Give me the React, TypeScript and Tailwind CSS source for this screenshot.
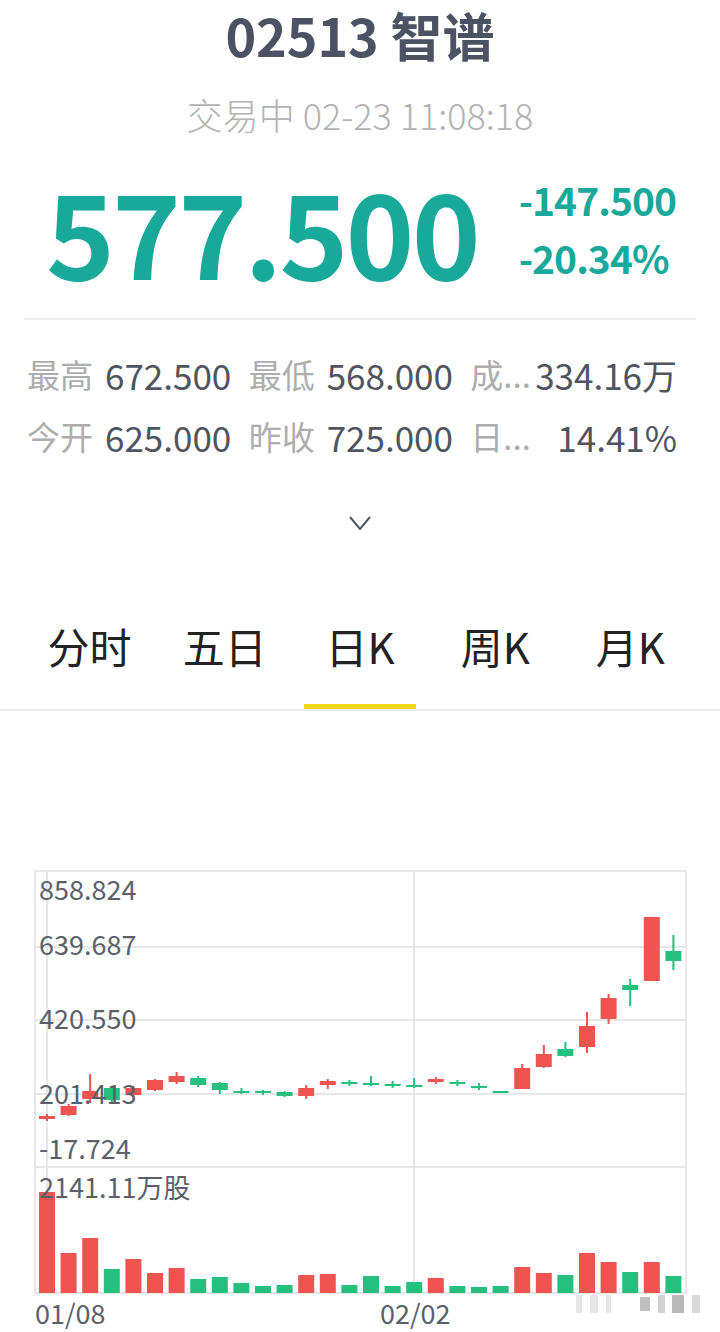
import React from 'react';

type Candle = [string, number, number, number, number];

const RED = '#ef5451';
const GREEN = '#25bf7e';

// [colour, bodyTop, bodyBottom, wickTop, wickBottom] in page pixels
const candles: Candle[] = [
  ['r', 1118, 1121, 1116, 1123],
  ['r', 1108, 1117, 1106, 1118],
  ['r', 1093, 1101, 1076, 1105],
  ['g', 1090, 1102, 1088, 1105],
  ['r', 1090, 1097, 1088, 1099],
  ['r', 1082, 1092, 1081, 1093],
  ['r', 1078, 1084, 1074, 1086],
  ['g', 1080, 1087, 1078, 1089],
  ['g', 1085, 1092, 1084, 1096],
  ['g', 1093, 1095, 1090, 1096],
  ['g', 1093, 1095, 1092, 1097],
  ['g', 1094, 1098, 1093, 1099],
  ['r', 1090, 1098, 1087, 1101],
  ['r', 1083, 1087, 1081, 1091],
  ['g', 1084, 1086, 1082, 1088],
  ['g', 1085, 1087, 1078, 1088],
  ['g', 1086, 1088, 1083, 1090],
  ['g', 1087, 1089, 1080, 1090],
  ['r', 1081, 1084, 1079, 1086],
  ['g', 1084, 1086, 1082, 1088],
  ['g', 1088, 1090, 1085, 1092],
  ['g', 1093, 1095, 1093, 1095],
  ['r', 1070, 1091, 1066, 1091],
  ['r', 1056, 1069, 1047, 1070],
  ['g', 1051, 1058, 1044, 1059],
  ['r', 1028, 1049, 1014, 1055],
  ['r', 1000, 1021, 996, 1026],
  ['g', 987, 992, 981, 1008],
  ['r', 919, 983, 919, 983],
  ['g', 953, 963, 937, 972],
];

const volumes = [
  1194, 1255, 1240, 1271, 1261, 1275, 1270, 1281, 1279, 1285, 1288, 1287, 1277, 1276, 1287,
  1278, 1288, 1284, 1280, 1288, 1289, 1288, 1269, 1275, 1277, 1255, 1264, 1274, 1264, 1278,
];

const cx = (i: number) => 47 + i * 21.6;

const KChart = () => (
  <svg width={720} height={472} viewBox="0 860 720 472" className="block">
    {/* frame + grid */}
    <g stroke="#e8e8e8" strokeWidth={2} fill="none">
      <rect x={35} y={873} width={651} height={422} />
      <line x1={35} y1={949} x2={686} y2={949} />
      <line x1={35} y1={1022} x2={686} y2={1022} />
      <line x1={35} y1={1096} x2={686} y2={1096} />
      <line x1={35} y1={1169} x2={686} y2={1169} />
      <line x1={47} y1={873} x2={47} y2={1295} />
      <line x1={414} y1={873} x2={414} y2={1295} />
    </g>

    {candles.map(([c, bt, bb, wt, wb], i) => {
      const fill = c === 'r' ? RED : GREEN;
      const x = cx(i);
      return (
        <g key={i} fill={fill}>
          <rect x={x - 1} y={wt} width={2} height={wb - wt} />
          <rect x={x - 8} y={bt} width={16} height={Math.max(bb - bt, 2)} />
        </g>
      );
    })}

    {volumes.map((top, i) => (
      <rect
        key={i}
        x={cx(i) - 8}
        y={top}
        width={16}
        height={1295 - top}
        fill={candles[i][0] === 'r' ? RED : GREEN}
      />
    ))}

    {/* watermark smudge */}
    <g fill="#e2e2e2" opacity={0.8}>
      <rect x={576} y={1297} width={6} height={18} />
      <rect x={590} y={1297} width={8} height={18} />
      <rect x={606} y={1297} width={5} height={18} />
      <rect x={640} y={1299} width={10} height={14} fill="#b0b0b0" />
      <rect x={658} y={1297} width={7} height={18} fill="#c8c8c8" />
      <rect x={672} y={1297} width={12} height={18} fill="#a8a8a8" />
      <rect x={692} y={1297} width={8} height={18} fill="#d0d0d0" />
    </g>

    <g fill="#5b5f69" fontSize={27}>
      <text x={39} y={902}>858.824</text>
      <text x={39} y={957}>639.687</text>
      <text x={39} y={1031}>420.550</text>
      <text x={39} y={1106}>201.413</text>
      <text x={39} y={1161}>-17.724</text>
      <text x={39} y={1200}>2141.11万股</text>
      <text x={35} y={1326}>01/08</text>
      <text x={380} y={1326}>02/02</text>
    </g>
  </svg>
);

const tabs = ['分时', '五日', '日K', '周K', '月K'];

const stats = [
  ['最高', '672.500', '最低', '568.000', '成...', '334.16万'],
  ['今开', '625.000', '昨收', '725.000', '日...', '14.41%'],
];

export default function App() {
  return (
    <div className="w-[720px] h-[1332px] overflow-hidden bg-white font-['Noto_Sans_CJK_SC','Noto_Sans',sans-serif]">
      {/* Header */}
      <div className="h-[70px] flex items-center justify-center text-[52px] font-bold text-[#4b5263] leading-[70px]">
        02513 智谱
      </div>
      <div className="h-[88px] flex items-center justify-center text-[36px] font-light text-[#b3b3b3] leading-none">
        交易中 02-23 11:08:18
      </div>

      {/* Price */}
      <div className="h-[142px] flex items-center pl-[46px] pr-[44px]">
        <div className="text-[117px] font-bold leading-none text-[#19a99b] tracking-tight">577.500</div>
        <div className="ml-auto -mt-[2px] flex flex-col gap-[19px] text-[39px] font-bold leading-none text-[#19a99b] tracking-tight">
          <span>-147.500</span>
          <span>-20.34%</span>
        </div>
      </div>
      <div className="mt-[18px] mx-[24px] h-[2px] bg-[#eeeeee]" />

      {/* Stats */}
      <div className="pt-[23px] pl-[27px] pr-[43px] leading-none">
        {stats.map((row, r) => (
          <div key={r} className="h-[62px] grid grid-cols-3 gap-x-[15px] items-center">
            <div className="flex items-center">
              <span className="text-[33px] text-[#adadad]">{row[0]}</span>
              <span className="ml-[12px] text-[35px] text-[#4f545e]">{row[1]}</span>
            </div>
            <div className="flex items-center">
              <span className="text-[33px] text-[#adadad]">{row[2]}</span>
              <span className="ml-[12px] text-[35px] text-[#4f545e]">{row[3]}</span>
            </div>
            <div className="flex items-center">
              <span className="text-[33px] text-[#adadad] whitespace-nowrap">{row[4]}</span>
              <span className="ml-auto text-[35px] text-[#4f545e] whitespace-nowrap">{row[5]}</span>
            </div>
          </div>
        ))}
      </div>

      {/* Expand chevron */}
      <div className="h-[112px] flex items-center justify-center">
        <svg width="22" height="14" viewBox="0 0 22 14" fill="none">
          <polyline points="1,1 11,13 21,1" stroke="#555a63" strokeWidth="2" />
        </svg>
      </div>

      {/* Tabs */}
      <div className="flex px-[22px]">
        {tabs.map((t, i) => (
          <div key={t} className="flex-1 flex flex-col items-center">
            <span className="mt-[43px] h-[48px] leading-[48px] text-[42px] text-[#222222]">{t}</span>
            <span className={`mt-[34px] h-[5px] w-[112px] ${i === 2 ? 'bg-[#f8d81c]' : 'bg-transparent'}`} />
          </div>
        ))}
      </div>
      <div className="h-[2px] bg-[#ececec]" />

      {/* Chart */}
      <div className="mt-[147px]">
        <KChart />
      </div>
    </div>
  );
}
